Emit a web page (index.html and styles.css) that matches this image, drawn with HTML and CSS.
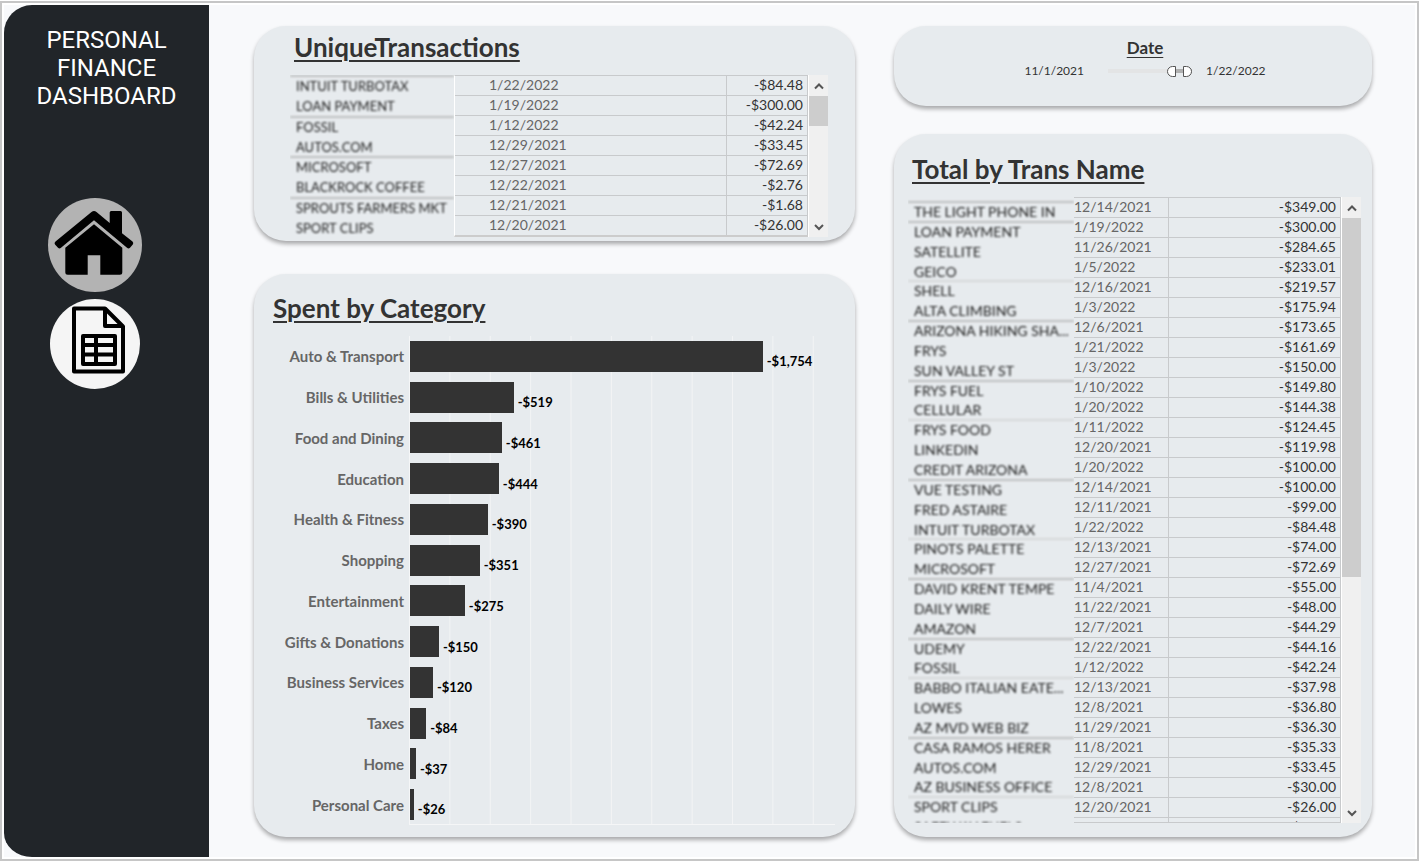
FILE: index.html
```html
<!DOCTYPE html>
<html lang="en">
<head>
<meta charset="utf-8">
<title>Personal Finance Dashboard</title>
<link rel="stylesheet" href="styles.css">
</head>
<body>
<div class="frame">
  <aside class="sidebar">
    <h1 class="brand">PERSONAL FINANCE DASHBOARD</h1>
    <nav class="nav">
      <button class="nav-button nav-home" type="button" aria-label="Home">
        <svg viewBox="0 0 94 94" aria-hidden="true">
          <path d="M43.5 14Q46 12 48.500 14L61.700 25V14.500Q61.700 13 63.200 13H72.500Q74 13 74 14.500V35.300L84.500 43.500Q86 45 84.800 46.500L82 49.800Q80.500 51 79 49.800L46 22.300L13 49.800Q11.500 51 10 49.800L7 46.500Q5.800 45 7.500 43.500Z"/>
          <path d="M46 26.300L74.300 49.700V74.200Q74.300 76.700 71.800 76.700H52.300V57.300H39.700V76.700H19.800Q17.300 76.700 17.300 74.200V49.700Z"/>
        </svg>
      </button>
      <button class="nav-button nav-sheet" type="button" aria-label="Transactions sheet">
        <svg viewBox="0 0 90 90" aria-hidden="true" fill="none" stroke="#000" stroke-width="4" stroke-linejoin="round">
          <path d="M24 9.500H55L73 27.500V72.500H24Z"/>
          <path d="M55 9.500V27H73"/>
          <rect x="33" y="37" width="32" height="28"/>
          <path d="M46 37V65M33 46H65M33 55.500H65"/>
        </svg>
      </button>
    </nav>
  </aside>

  <main class="board">
    <div class="column">
      <section class="card unique">
        <h2 class="title">UniqueTransactions</h2>
        <div class="grid-view">
          <ul class="names">
            <li class="rule">INTUIT TURBOTAX</li>
            <li>LOAN PAYMENT</li>
            <li class="rule">FOSSIL</li>
            <li>AUTOS.COM</li>
            <li class="rule">MICROSOFT</li>
            <li>BLACKROCK COFFEE</li>
            <li class="rule">SPROUTS FARMERS MKT</li>
            <li>SPORT CLIPS</li>
          </ul>
          <div class="table-clip">
            <table class="records">
              <tr><td>1/22/2022</td><td>-$84.48</td></tr>
              <tr><td>1/19/2022</td><td>-$300.00</td></tr>
              <tr><td>1/12/2022</td><td>-$42.24</td></tr>
              <tr><td>12/29/2021</td><td>-$33.45</td></tr>
              <tr><td>12/27/2021</td><td>-$72.69</td></tr>
              <tr><td>12/22/2021</td><td>-$2.76</td></tr>
              <tr><td>12/21/2021</td><td>-$1.68</td></tr>
              <tr><td>12/20/2021</td><td>-$26.00</td></tr>
            </table>
          </div>
          <div class="scrollbar">
            <button type="button" aria-label="Scroll up"><svg viewBox="0 0 12 12"><path d="M2 8.500L6 4.500L10 8.500"/></svg></button>
            <div class="rail"><div class="thumb"></div></div>
            <button type="button" aria-label="Scroll down"><svg viewBox="0 0 12 12"><path d="M2 4L6 8L10 4"/></svg></button>
          </div>
        </div>
      </section>

      <section class="card spent">
        <h2 class="title">Spent by Category</h2>
        <ul class="chart">
          <li><span class="category">Auto &amp; Transport</span><div class="track"><div class="bar" style="width:83%"></div><span class="amount">-$1,754</span></div></li>
          <li><span class="category">Bills &amp; Utilities</span><div class="track"><div class="bar" style="width:24.4%"></div><span class="amount">-$519</span></div></li>
          <li><span class="category">Food and Dining</span><div class="track"><div class="bar" style="width:21.6%"></div><span class="amount">-$461</span></div></li>
          <li><span class="category">Education</span><div class="track"><div class="bar" style="width:20.9%"></div><span class="amount">-$444</span></div></li>
          <li><span class="category">Health &amp; Fitness</span><div class="track"><div class="bar" style="width:18.3%"></div><span class="amount">-$390</span></div></li>
          <li><span class="category">Shopping</span><div class="track"><div class="bar" style="width:16.4%"></div><span class="amount">-$351</span></div></li>
          <li><span class="category">Entertainment</span><div class="track"><div class="bar" style="width:12.9%"></div><span class="amount">-$275</span></div></li>
          <li><span class="category">Gifts &amp; Donations</span><div class="track"><div class="bar" style="width:6.8%"></div><span class="amount">-$150</span></div></li>
          <li><span class="category">Business Services</span><div class="track"><div class="bar" style="width:5.4%"></div><span class="amount">-$120</span></div></li>
          <li><span class="category">Taxes</span><div class="track"><div class="bar" style="width:3.8%"></div><span class="amount">-$84</span></div></li>
          <li><span class="category">Home</span><div class="track"><div class="bar" style="width:1.4%"></div><span class="amount">-$37</span></div></li>
          <li><span class="category">Personal Care</span><div class="track"><div class="bar" style="width:0.9%"></div><span class="amount">-$26</span></div></li>
        </ul>
      </section>
    </div>

    <div class="column">
      <section class="card date">
        <h2 class="subtitle">Date</h2>
        <div class="range">
          <label for="from">11/1/2021</label>
          <div class="slider">
            <input class="from" id="from" type="range" min="0" max="100" value="79">
            <input class="to" id="to" type="range" min="0" max="100" value="100">
          </div>
          <label for="to">1/22/2022</label>
        </div>
      </section>

      <section class="card total">
        <h2 class="title">Total by Trans Name</h2>
        <div class="grid-view">
          <ul class="names">
            <li class="rule">THE LIGHT PHONE IN</li>
            <li class="rule">LOAN PAYMENT</li>
            <li>SATELLITE</li>
            <li>GEICO</li>
            <li class="rule faint">SHELL</li>
            <li>ALTA CLIMBING</li>
            <li class="rule">ARIZONA HIKING SHA...</li>
            <li>FRYS</li>
            <li>SUN VALLEY ST</li>
            <li class="rule">FRYS FUEL</li>
            <li>CELLULAR</li>
            <li class="rule faint">FRYS FOOD</li>
            <li>LINKEDIN</li>
            <li>CREDIT ARIZONA</li>
            <li class="rule">VUE TESTING</li>
            <li>FRED ASTAIRE</li>
            <li>INTUIT TURBOTAX</li>
            <li class="rule faint">PINOTS PALETTE</li>
            <li>MICROSOFT</li>
            <li class="rule">DAVID KRENT TEMPE</li>
            <li>DAILY WIRE</li>
            <li>AMAZON</li>
            <li class="rule">UDEMY</li>
            <li>FOSSIL</li>
            <li class="rule faint">BABBO ITALIAN EATE...</li>
            <li>LOWES</li>
            <li>AZ MVD WEB BIZ</li>
            <li class="rule">CASA RAMOS HERER</li>
            <li>AUTOS.COM</li>
            <li>AZ BUSINESS OFFICE</li>
            <li class="rule faint">SPORT CLIPS</li>
            <li class="cut">SAFEWAY FUELS</li>
          </ul>
          <div class="table-clip">
            <table class="records">
              <tr><td>12/14/2021</td><td>-$349.00</td></tr>
              <tr><td>1/19/2022</td><td>-$300.00</td></tr>
              <tr><td>11/26/2021</td><td>-$284.65</td></tr>
              <tr><td>1/5/2022</td><td>-$233.01</td></tr>
              <tr><td>12/16/2021</td><td>-$219.57</td></tr>
              <tr><td>1/3/2022</td><td>-$175.94</td></tr>
              <tr><td>12/6/2021</td><td>-$173.65</td></tr>
              <tr><td>1/21/2022</td><td>-$161.69</td></tr>
              <tr><td>1/3/2022</td><td>-$150.00</td></tr>
              <tr><td>1/10/2022</td><td>-$149.80</td></tr>
              <tr><td>1/20/2022</td><td>-$144.38</td></tr>
              <tr><td>1/11/2022</td><td>-$124.45</td></tr>
              <tr><td>12/20/2021</td><td>-$119.98</td></tr>
              <tr><td>1/20/2022</td><td>-$100.00</td></tr>
              <tr><td>12/14/2021</td><td>-$100.00</td></tr>
              <tr><td>12/11/2021</td><td>-$99.00</td></tr>
              <tr><td>1/22/2022</td><td>-$84.48</td></tr>
              <tr><td>12/13/2021</td><td>-$74.00</td></tr>
              <tr><td>12/27/2021</td><td>-$72.69</td></tr>
              <tr><td>11/4/2021</td><td>-$55.00</td></tr>
              <tr><td>11/22/2021</td><td>-$48.00</td></tr>
              <tr><td>12/7/2021</td><td>-$44.29</td></tr>
              <tr><td>12/22/2021</td><td>-$44.16</td></tr>
              <tr><td>1/12/2022</td><td>-$42.24</td></tr>
              <tr><td>12/13/2021</td><td>-$37.98</td></tr>
              <tr><td>12/8/2021</td><td>-$36.80</td></tr>
              <tr><td>11/29/2021</td><td>-$36.30</td></tr>
              <tr><td>11/8/2021</td><td>-$35.33</td></tr>
              <tr><td>12/29/2021</td><td>-$33.45</td></tr>
              <tr><td>12/8/2021</td><td>-$30.00</td></tr>
              <tr><td>12/20/2021</td><td>-$26.00</td></tr>
              <tr><td>1/21/2022</td><td>-$25.25</td></tr>
            </table>
          </div>
          <div class="scrollbar">
            <button type="button" aria-label="Scroll up"><svg viewBox="0 0 12 12"><path d="M2 8.500L6 4.500L10 8.500"/></svg></button>
            <div class="rail"><div class="thumb"></div></div>
            <button type="button" aria-label="Scroll down"><svg viewBox="0 0 12 12"><path d="M2 4L6 8L10 4"/></svg></button>
          </div>
        </div>
      </section>
    </div>
  </main>
</div>
</body>
</html>
```
FILE: styles.css
```css
* { box-sizing: border-box; }

body {
  margin: 0;
  padding-top: 1px;
  background: #fff;
  color: #333;
  font-family: "Trebuchet MS", Lato, "Open Sans", sans-serif;
  font-size: 14px;
}

ul { margin: 0; padding: 0; list-style: none; }
h1, h2 { margin: 0; }
button { border: 0; padding: 0; cursor: pointer; }

.frame {
  display: flex;
  min-height: calc(100vh - 1px);
  padding: 2px;
  border: 2px solid #c6c6c6;
  background: #f8f9fb;
  box-shadow: inset 0 0 0 2px #fff;
}

/* Sidebar */
.sidebar {
  flex: 0 0 205px;
  padding-top: 21px;
  background: #212529;
  border-radius: 28px 0 0 28px / 28px 0 0 24px;
}

.brand {
  padding: 0 20px;
  color: #fff;
  font: 400 24px/28px Roboto, sans-serif;
  text-align: center;
}

.nav {
  display: flex;
  flex-direction: column;
  align-items: center;
  gap: 7px;
  width: 94px;
  margin: 88px 0 0 44px;
}

.nav-button { border-radius: 50%; }
.nav-button svg { display: block; width: 100%; }
.nav-home { width: 94px; height: 94px; background: #b3b3b3; }
.nav-sheet { width: 90px; height: 90px; background: #f5f5f5; }

/* Board */
.board {
  flex: 1;
  display: grid;
  grid-template-columns: 601fr 478fr;
  gap: 39px;
  padding: 21px 43px 20px 45px;
}

.column { display: flex; flex-direction: column; min-width: 0; }

.card {
  background: #e7ebee;
  border-radius: 32px;
  box-shadow: 0 3px 4px rgba(0, 0, 0, 0.32);
}

.title {
  font-size: 26px;
  line-height: 30px;
  text-decoration: underline;
  text-decoration-thickness: 2px;
  text-underline-offset: 3px;
}

.unique { margin-bottom: 33px; padding: 6px 27px 4px 36px; }
.unique .title { padding-left: 4px; }
.unique .grid-view { margin-top: 13px; height: 162px; }

.spent {
  flex: 1;
  display: flex;
  flex-direction: column;
  padding: 19px 20px 12px 19px;
}

.date {
  height: 80px;
  margin-bottom: 28px;
  padding: 12px 0 0 24px;
  text-align: center;
}

.total {
  flex: 1;
  display: flex;
  flex-direction: column;
  padding: 20px 11px 14px 14px;
}
.total .title { padding-left: 4px; }
.total .grid-view { flex: 1 1 0; min-height: 0; margin-top: 13px; }

/* Record lists */
.grid-view { display: flex; }

.names {
  display: flex;
  flex-direction: column;
  overflow: hidden;
  color: #222;
}
.names li {
  flex: 1 1 0;
  min-height: 0;
  padding-left: 6px;
  line-height: 18px;
  white-space: nowrap;
  border-top: 2px solid transparent;
  filter: blur(1px);
}
.names .rule { border-top-color: #bfc0c1; }
.names .faint { border-top-color: #d6d8d9; }
.names .cut { flex: 0 0 7px; overflow: hidden; }

.unique .names { flex: 0 0 164px; font-size: 13px; }
.total .names { flex: 0 0 166px; padding-top: 4px; }

.table-clip {
  flex: 1;
  overflow: hidden;
  border-top: 1px solid #c8cacc;
  border-bottom: 1px solid #c8cacc;
}
.unique .table-clip { border-left: 1px solid #fff; border-bottom: 2px solid #ccc; }

.records { width: 100%; border-spacing: 0; table-layout: fixed; }
.records td {
  height: 20px;
  padding: 0 0 1px;
  line-height: 18px;
  border-bottom: 1px solid #c8cacc;
  border-right: 1px solid #c8cacc;
}
.records td:first-child { color: #666; }
.records td:last-child { padding-right: 4px; text-align: right; }
.unique td:first-child { padding-left: 34px; }
.unique td:last-child { width: 81px; }
.total td:first-child { width: 95px; }

.scrollbar {
  flex: 0 0 20px;
  display: flex;
  flex-direction: column;
  background: #f0f0f0;
  border-left: 1px solid #fff;
}
.scrollbar button { height: 21px; background: transparent; }
.scrollbar svg {
  display: block;
  width: 12px;
  margin: 0 auto;
  fill: none;
  stroke: #555;
  stroke-width: 2;
}
.rail { flex: 1; }
.thumb { width: 19px; background: #cdcdcd; }
.unique .thumb { height: 25%; }
.total .thumb { height: 61.500%; }

/* Bar chart */
.chart {
  flex: 1;
  display: flex;
  flex-direction: column;
  margin-top: 13px;
}
.chart li { flex: 1; display: flex; }
.category {
  flex: 0 0 136px;
  align-self: center;
  padding-right: 5px;
  color: #666;
  font-weight: 700;
  font-size: 15px;
  line-height: 18px;
  text-align: right;
}
.track {
  flex: 1;
  display: flex;
  align-items: center;
  border-left: 1px solid #f5f6f7;
  background: linear-gradient(to left, #f3f4f5 1px, transparent 1px) 0 0 / 9.500% 100%;
}
.chart li:last-child .track { border-bottom: 1px solid #f5f6f7; }
.bar { height: 31px; background: #333; }
.amount {
  padding: 10px 0 0 4px;
  color: #000;
  font-weight: 700;
  font-size: 13px;
}

/* Date range */
.subtitle {
  font-size: 17px;
  line-height: 20px;
  text-decoration: underline;
  text-underline-offset: 3px;
}
.range {
  display: flex;
  justify-content: center;
  align-items: center;
  margin-top: 5px;
  font-size: 12px;
  line-height: 16px;
}
.slider {
  display: grid;
  width: 84px;
  margin: 0 14px 0 24px;
  background: linear-gradient(to right, #e3e4e5 75%, #b0b0b0 75%) center / 100% 4px no-repeat;
}
.slider input {
  grid-area: 1 / 1;
  appearance: none;
  width: 100%;
  height: 12px;
  margin: 0;
  background: transparent;
  pointer-events: none;
}
.slider input::-webkit-slider-thumb {
  appearance: none;
  width: 9px;
  height: 11px;
  border: 1px solid #555;
  background: #fff;
  pointer-events: auto;
}
.slider .from::-webkit-slider-thumb { border-radius: 6px 0 0 6px; }
.slider .to::-webkit-slider-thumb { border-radius: 0 6px 6px 0; }
```
